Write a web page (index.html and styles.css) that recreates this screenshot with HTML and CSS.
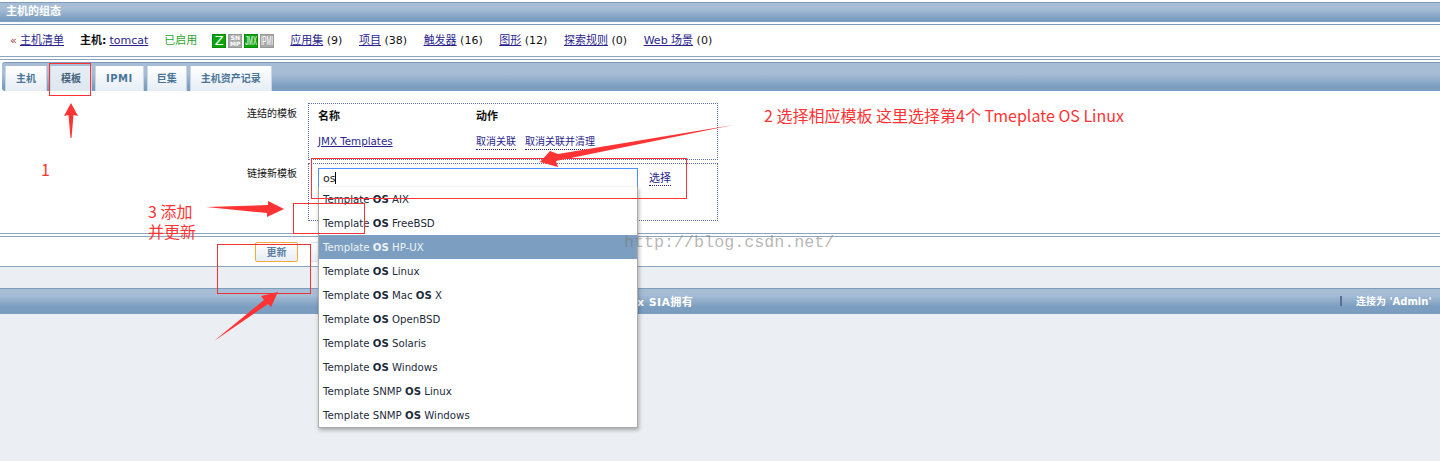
FILE: index.html

```html
<!DOCTYPE html>
<html lang="zh-CN">
<head>
  <meta charset="UTF-8" />
  <title>主机的组态</title>
  <link rel="stylesheet" href="styles.css">
</head>
<body>
  <div class="titlebar">主机的组态</div>

  <div class="hostbar">
    <span class="back">«</span>
    <a class="link first" href="#">主机清单</a>
    <b class="hostname">主机:</b>
    <a class="link" href="#">tomcat</a>
    <span class="enabled">已启用</span>
    <span class="badges">
      <span class="badge on"><span>Z</span></span>
      <span class="badge off two">SN<br>MP</span>
      <span class="badge on narrow"><span>JMX</span></span>
      <span class="badge off narrow"><span>IPMI</span></span>
    </span>
    <span class="count"><a class="link" href="#">应用集</a> (9)</span>
    <span class="count"><a class="link" href="#">项目</a> (38)</span>
    <span class="count"><a class="link" href="#">触发器</a> (16)</span>
    <span class="count"><a class="link" href="#">图形</a> (12)</span>
    <span class="count"><a class="link" href="#">探索规则</a> (0)</span>
    <span class="count"><a class="link" href="#">Web 场景</a> (0)</span>
  </div>

  <div class="tabwrap">
    <div class="tabbar">
      <a class="tab" href="#">主机</a>
      <a class="tab active" href="#">模板</a>
      <a class="tab wide" href="#">IPMI</a>
      <a class="tab tight" href="#">巨集</a>
      <a class="tab" href="#">主机资产记录</a>
    </div>
  </div>

  <div class="form">
    <div class="form-row">
      <div class="form-label">连结的模板</div>
      <div class="dotted linked">
        <div class="linked-row heads"><b>名称</b><b>动作</b></div>
        <div class="linked-row">
          <a class="link small" href="#">JMX Templates</a>
          <span class="actions">
            <a class="dot-link" href="#">取消关联</a>
            <a class="dot-link" href="#">取消关联并清理</a>
          </span>
        </div>
      </div>
    </div>
    <div class="form-row">
      <div class="form-label">链接新模板</div>
      <div class="dotted newlink">
        <div class="search-wrap">
          <div class="search">os<i class="caret"></i></div>
          <ul class="suggest">
            <li>Template <b>OS</b> AIX</li>
            <li>Template <b>OS</b> FreeBSD</li>
            <li class="current">Template <b>OS</b> HP-UX</li>
            <li>Template <b>OS</b> Linux</li>
            <li>Template <b>OS</b> Mac <b>OS</b> X</li>
            <li>Template <b>OS</b> OpenBSD</li>
            <li>Template <b>OS</b> Solaris</li>
            <li>Template <b>OS</b> Windows</li>
            <li>Template SNMP <b>OS</b> Linux</li>
            <li>Template SNMP <b>OS</b> Windows</li>
          </ul>
        </div>
        <a class="dot-link pick" href="#">选择</a>
      </div>
    </div>
  </div>

  <div class="buttons">
    <button class="btn hover">更新</button>
    <button class="btn"></button>
  </div>

  <div class="pagefoot">
    <span class="copy">Zabbix SIA拥有</span>
    <span class="sep"></span>
    <span class="who">连接为 'Admin'</span>
  </div>

  <!-- screenshot annotations drawn on top of the page -->
  <svg class="marks" width="1440" height="461" viewBox="0 0 1440 461">
    <g fill="none" stroke="#f33" stroke-width="1">
      <rect x="49.5" y="63.5" width="41" height="32" />
      <rect x="311.5" y="158.5" width="375" height="40" />
    </g>
    <g fill="none" stroke="#e33" stroke-width="1">
      <rect x="293.5" y="203.5" width="71" height="30" />
      <rect x="217.5" y="244.5" width="93" height="49" />
    </g>
    <g fill="#f33">
      <path d="M71 103 L78 116 L73.5 115 L71.5 138 L70.5 138 L68.5 115 L64 116 Z" />
      <path d="M733 125 L558 154 L550 151 L540 162 L558 167 L556 161 Z" />
      <path d="M206 207 L268 205 L268 201 L284 209 L267 217 L267 213 Z" />
      <path d="M214 341 L264 300 L261 296 L278 292 L271 307 L268 304 Z" />
    </g>
  </svg>
  <div class="note note-1">1</div>
  <div class="note note-2">2 选择相应模板 这里选择第4个 Tmeplate OS Linux</div>
  <div class="note note-3">3 添加<br>并更新</div>
  <div class="watermark">http://blog.csdn.net/</div>
</body>
</html>
```

FILE: styles.css

```css
* {
  box-sizing: border-box;
}

html, body {
  margin: 0;
  height: 461px;
  overflow: hidden;
}

body {
  position: relative;
  background-color: #ebeef2;
  color: #111;
  font-family: "DejaVu Sans", "Noto Sans CJK SC", sans-serif;
  font-size: 11px;
}

.titlebar {
  height: 24px;
  padding: 5px 0 0 6px;
  background: linear-gradient(#fff 0, #fff 2px, #7f9dbb 2px, #7f9dbb 3px, #a6bdd5 3px, #a6bdd5 9px, #7a9dc0 19px, #7a9dc0 22px, #fff 22px);
  color: #fff;
  font-weight: bold;
  line-height: 14px;
}

.hostbar {
  display: flex;
  align-items: center;
  height: 33px;
  padding: 0 0 0 10px;
  border-top: 1px solid #7f9dbb;
  border-bottom: 1px solid #8ea5bd;
  background-color: #fff;
  line-height: 14px;
}

.back {
  color: #a33;
  width: 10px;
}

.hostname {
  margin-left: 16px;
  margin-right: 3px;
}

.enabled {
  margin-left: 16px;
  color: #2aa52a;
}

.badges {
  display: flex;
  gap: 2px;
  margin-left: 15px;
  margin-right: 16px;
}

.badge {
  display: block;
  width: 14px;
  height: 14px;
  border: 1px solid #999;
  color: #fff;
  font-size: 13px;
  line-height: 12px;
  text-align: center;
  overflow: hidden;
}

.badge.on {
  border-color: #0a8a0a;
  background-color: #0aa50a;
}

.badge.off {
  background-color: #aaa;
}

.badge.two {
  font-size: 6px;
  font-weight: bold;
  line-height: 6px;
}

.badge.narrow span {
  display: block;
  width: 30px;
  margin-left: -9px;
  font-family: "Liberation Sans", sans-serif;
  font-size: 13px;
  white-space: nowrap;
  transform: scaleX(0.45);
}

.count {
  margin-right: 16.6px;
  white-space: pre;
}

.link {
  color: #2b1f8f;
  text-decoration: underline;
}

.link.small {
  font-size: 10.3px;
}

.dot-link {
  color: #2b1f8f;
  font-size: 10px;
  text-decoration: none;
  border-bottom: 1px dotted #2b1f8f;
}

.tabwrap {
  height: 34px;
  padding: 5px 0 0 2px;
  background: linear-gradient(#fff 0, #fff 2px, #8ea5bd 2px, #8ea5bd 3px, #fff 3px);
}

.tabbar {
  display: flex;
  align-items: flex-end;
  gap: 3px;
  height: 29px;
  padding: 0 0 0 3px;
  border-top: 1px solid #7f9dbb;
  border-radius: 3px 0 0 3px;
  background: linear-gradient(#a6bdd5 0, #a6bdd5 11px, #7a9dc0 24px);
}

.tab {
  display: block;
  height: 25px;
  padding: 0 10px;
  background: linear-gradient(#fff, #e6edf5);
  border-left: 1px solid #c9d6e3;
  border-right: 1px solid #c9d6e3;
  color: #4a7598;
  font-size: 10px;
  font-weight: bold;
  line-height: 26px;
  text-decoration: none;
}

.tab.active {
  color: #44617c;
  background: linear-gradient(#e6edf5, #dfe7f0);
}

.tab.wide {
  letter-spacing: 0.5px;
}

.tab.tight {
  padding: 0 9px;
}

.form {
  padding-top: 12px;
  padding-bottom: 12px;
  background-color: #fff;
}

.form-row {
  display: flex;
  gap: 11px;
  margin-bottom: 3px;
}

.form-row:last-child {
  margin-bottom: 0;
}

.form-label {
  width: 297px;
  padding-top: 2px;
  font-size: 10px;
  text-align: right;
}

.dotted {
  width: 410px;
  border: 1px dotted #5a6fb0;
}

.linked {
  height: 57px;
  padding: 0 9px;
  line-height: 14px;
}

.linked-row {
  display: flex;
  height: 25px;
  align-items: center;
}

.linked-row.heads {
  height: 24px;
  padding-top: 2px;
}

.linked-row > :first-child {
  width: 158px;
}

.actions {
  display: flex;
  gap: 9px;
  margin-top: 3px;
}

.newlink {
  display: flex;
  height: 58px;
  padding: 4px 9px 0;
}

.search-wrap {
  position: relative;
  width: 320px;
  height: 24px;
}

.search {
  height: 24px;
  padding: 3px 0 0 4px;
  border: 1px solid #4d90fe;
  background-color: #fff;
  color: #222;
  line-height: 14px;
}

.caret {
  display: inline-block;
  width: 1px;
  height: 12px;
  vertical-align: -2px;
  background-color: #000;
}

.suggest {
  position: absolute;
  top: 19px;
  left: 0;
  z-index: 5;
  width: 320px;
  margin: 0;
  padding: 0;
  list-style: none;
  border-left: 1px solid #aaa;
  border-right: 1px solid #aaa;
  border-bottom: 1px solid #aaa;
  background-color: #fff;
  box-shadow: 1px 2px 4px rgba(0, 0, 0, 0.3);
}

.suggest li {
  height: 24px;
  padding-left: 4px;
  color: #1c2b3a;
  font-size: 10.2px;
  line-height: 26px;
}

.suggest li.current {
  background-color: #7c9fc1;
  color: #eef3f8;
}

.pick {
  align-self: flex-start;
  margin-top: 1px;
  margin-left: 11px;
  font-size: 11px;
}

.buttons {
  display: flex;
  gap: 12px;
  height: 34px;
  padding: 5px 0 0 255px;
  border-top: 4px double #8ea5bd;
  border-bottom: 1px solid #8ea5bd;
  background-color: #fff;
}

.btn {
  width: 43px;
  height: 20px;
  padding: 0 0 2px;
  border: 1px solid #dce3ea;
  border-radius: 2px;
  background: linear-gradient(#fff, #e6edf5);
  color: #5c7fa3;
  font-family: inherit;
  font-size: 10px;
  font-weight: bold;
}

.btn.hover {
  border-color: #f5a83c;
}

.pagefoot {
  display: flex;
  align-items: center;
  height: 26px;
  margin-top: 21px;
  padding-bottom: 2px;
  border-top: 1px solid #7f9dbb;
  background: linear-gradient(#a6bdd5 0, #a6bdd5 6px, #7a9dc0 18px);
  color: #fff;
  font-weight: bold;
}

.copy {
  margin-left: 600px;
  letter-spacing: 0.4px;
}

.sep {
  width: 2px;
  height: 10px;
  margin-left: auto;
  background-color: #5a6f95;
}

.who {
  width: 84px;
  margin-left: 14px;
  font-size: 10px;
}

.marks {
  position: absolute;
  top: 0;
  left: 0;
  z-index: 10;
}

.note {
  position: absolute;
  z-index: 11;
  color: #f33;
  font-family: "Noto Sans CJK SC", "Noto Sans", sans-serif;
  font-size: 16px;
  line-height: 20px;
  white-space: nowrap;
}

.note-1 {
  top: 159px;
  left: 41px;
}

.note-2 {
  top: 105px;
  left: 764px;
}

.note-3 {
  top: 201px;
  left: 148px;
}

.watermark {
  position: absolute;
  top: 233px;
  left: 624px;
  z-index: 11;
  color: rgba(120, 120, 120, 0.55);
  font-family: "Liberation Mono", monospace;
  font-size: 16.7px;
  line-height: 20px;
}
```
